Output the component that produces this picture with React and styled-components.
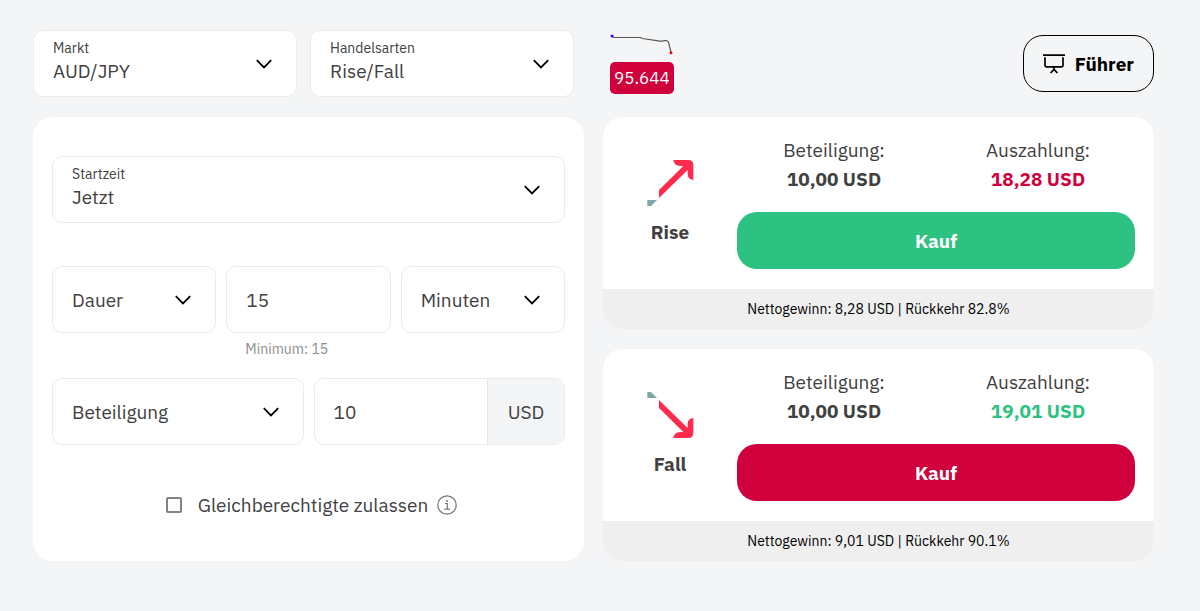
import React from 'react';
import styled, { createGlobalStyle } from 'styled-components';

const GlobalStyle = createGlobalStyle`
  *, *::before, *::after { box-sizing: border-box; }
  body {
    margin: 0;
    background: #f4f5f7;
    color: #414141;
    font-family: "IBM Plex Sans", Roboto, "Noto Sans", sans-serif;
    font-size: 19px;
  }
  button, input, select { font: inherit; color: inherit; }
`;

const Page = styled.main`
  display: grid;
  grid-template-columns: minmax(0, 1fr) minmax(0, 1fr);
  gap: 20px 19px;
  padding: 30px 46px 50px 33px;
`;

const MarketBar = styled.div`
  display: grid;
  grid-template-columns: 1fr 1fr;
  gap: 13px;
  padding-right: 10px;
`;

const InfoBar = styled.div`
  display: flex;
  align-items: center;
  justify-content: space-between;
  padding-left: 7px;
`;

const Quote = styled.div`
  display: grid;
  gap: 6px;
  justify-items: start;
`;

const QuoteValue = styled.output`
  padding: 0 4px;
  border-radius: 5px;
  background: #cf003c;
  color: #fff;
  font-size: 17px;
  line-height: 32px;
`;

const GuideButton = styled.button`
  display: flex;
  align-items: center;
  gap: 10px;
  height: 57px;
  padding: 0 19px;
  border: 1px solid #000;
  border-radius: 20px;
  background: transparent;
  color: #000;
  font-weight: 700;
`;

const Field = styled.div`
  display: grid;
  min-width: 0;
  height: 67px;
  border: 1px solid #ebebeb;
  border-radius: 10px;
  background: #fff;
  overflow: hidden;
`;

const FieldLabel = styled.label`
  grid-area: 1 / 1;
  align-self: start;
  justify-self: start;
  z-index: 1;
  padding: 7px 19px 0;
  font-size: 14px;
  line-height: 20px;
  pointer-events: none;
`;

const Select = styled.select`
  grid-area: 1 / 1;
  width: 100%;
  height: 100%;
  border: 0;
  padding: ${(p) => (p.$labelled ? '14px 48px 0 19px' : '0 48px 0 19px')};
  appearance: none;
  background: transparent;
`;

const Chevron = styled.svg`
  grid-area: 1 / 1;
  align-self: center;
  justify-self: end;
  margin-right: 23px;
  pointer-events: none;
`;

const TextInput = styled.input`
  width: 100%;
  min-width: 0;
  height: 100%;
  border: 0;
  padding: 0 19px;
  background: transparent;
`;

const Panel = styled.form`
  display: flex;
  flex-direction: column;
  padding: 39px 19px 46px;
  border-radius: 20px;
  background: #fff;
`;

const DurationRow = styled.div`
  display: grid;
  grid-template-columns: repeat(3, minmax(0, 1fr));
  align-items: start;
  gap: 10px;
  margin: 43px 0 19px;
`;

const StakeRow = styled.div`
  display: grid;
  grid-template-columns: repeat(2, minmax(0, 1fr));
  gap: 10px;
`;

const AmountField = styled(Field)`
  grid-template-columns: 1fr 77px;
`;

const Unit = styled.span`
  display: grid;
  place-items: center;
  border-left: 1px solid #e4e6e9;
  background: #f4f5f7;
`;

const Hint = styled.p`
  margin: 6px 0 0;
  padding-left: 19px;
  color: #8c8c8c;
  font-size: 14px;
  line-height: 20px;
`;

const EqualsRow = styled.div`
  display: flex;
  align-items: center;
  justify-content: center;
  margin-top: 50px;
  padding-left: 6px;
  line-height: 20px;
`;

const Checkbox = styled.input`
  width: 16px;
  height: 16px;
  margin: 0 16px 0 0;
  border: 2px solid #828282;
  border-radius: 2px;
  appearance: none;

  &:checked { background: #828282; }
`;

const InfoButton = styled.button`
  display: flex;
  margin-left: 9px;
  padding: 0;
  border: 0;
  background: none;
`;

const Contracts = styled.div`
  display: grid;
  gap: 20px;
`;

const Contract = styled.section`
  border-radius: 20px;
  background: #fff;
  overflow: hidden;
`;

const ContractBody = styled.div`
  display: grid;
  grid-template-columns: 134px 1fr;
  padding-right: 19px;
  height: 172px;
`;

const Direction = styled.div`
  display: flex;
  flex-direction: column;
  align-items: center;
  gap: 13px;
  padding-top: 42px;
`;

const DirectionName = styled.h2`
  margin: 0;
  font-size: 19px;
  font-weight: 700;
  line-height: 24px;
`;

const Arrow = styled.svg`
  transform: ${(p) => (p.$down ? 'scaleY(-1)' : 'none')};
`;

const Prices = styled.dl`
  display: grid;
  grid-template-columns: 1fr 1fr;
  gap: 10px;
  margin: 0 0 18px;
  padding-top: 19px;
  line-height: 29px;
  text-align: center;
`;

const PriceName = styled.dt`
  font-weight: 400;
`;

const PriceValue = styled.dd`
  margin: 0;
  color: ${(p) => p.$color || 'inherit'};
  font-weight: 700;
`;

const BuyButton = styled.button`
  display: block;
  width: 100%;
  height: 57px;
  border: 0;
  border-radius: 20px;
  background: ${(p) => p.$color};
  color: #fff;
  font-weight: 700;
`;

const ContractFooter = styled.footer`
  background: #efefef;
  color: #000;
  font-size: 14px;
  line-height: 40px;
  text-align: center;
`;

function SelectField({ id, label, value }) {
  return (
    <Field>
      {label && <FieldLabel htmlFor={id}>{label}</FieldLabel>}
      <Select id={id} $labelled={Boolean(label)} aria-label={label ? undefined : value}>
        <option>{value}</option>
      </Select>
      <Chevron width="18" height="12" viewBox="0 0 18 12" fill="none" aria-hidden="true">
        <path d="M1.8 2.2 9 9.4 16.2 2.2" stroke="#000" strokeWidth="1.8" />
      </Chevron>
    </Field>
  );
}

function ContractCard({ name, down, payout, payoutColor, buyColor, summary }) {
  return (
    <Contract>
      <ContractBody>
        <Direction>
          <Arrow $down={down} width="47" height="48" viewBox="140 147 141 144" aria-hidden="true">
            <path fill="#ff2b4c" d="M219 150H264Q279 150 279 165V210Q262 208 262 193V180L176 264V240L249 168H240Q220 167 219 150Z" />
            <path fill="#80a6ab" d="M141 270H170L152 288H141Z" />
          </Arrow>
          <DirectionName>{name}</DirectionName>
        </Direction>
        <div>
          <Prices>
            <div>
              <PriceName>Beteiligung:</PriceName>
              <PriceValue>10,00 USD</PriceValue>
            </div>
            <div>
              <PriceName>Auszahlung:</PriceName>
              <PriceValue $color={payoutColor}>{payout}</PriceValue>
            </div>
          </Prices>
          <BuyButton type="button" $color={buyColor}>Kauf</BuyButton>
        </div>
      </ContractBody>
      <ContractFooter>{summary}</ContractFooter>
    </Contract>
  );
}

const GREEN = '#2dc182';
const RED = '#cf003c';

export default function App() {
  return (
    <>
      <GlobalStyle />
      <Page>
        <MarketBar>
          <SelectField id="market" label="Markt" value="AUD/JPY" />
          <SelectField id="trade-type" label="Handelsarten" value="Rise/Fall" />
        </MarketBar>
        <InfoBar>
          <Quote>
            <svg width="64" height="22" viewBox="0 0 64 22" fill="none" aria-hidden="true">
              <path d="M2 2 4 3.5H30.5L32.5 4.5 50 7.2H52L54 6.6H56.5L58.5 8 61 18.5" stroke="#555" strokeWidth="1.2" />
              <circle cx="2" cy="2" r="1.5" fill="#2a00ff" />
              <circle cx="61" cy="18.7" r="1.5" fill="#f00000" />
            </svg>
            <QuoteValue>95.644</QuoteValue>
          </Quote>
          <GuideButton type="button">
            <svg width="22" height="20" viewBox="0 0 22 20" fill="none" stroke="#000" strokeWidth="1.7" aria-hidden="true">
              <path d="M0 1.2H22M2 3.2V11.6Q2 12.8 3.2 12.8H18.8Q20 12.8 20 11.6V3.2M11 12.8V16M11 15.4 7.6 19M11 15.4 14.4 19" />
            </svg>
            Führer
          </GuideButton>
        </InfoBar>

        <Panel>
          <SelectField id="start-time" label="Startzeit" value="Jetzt" />
          <DurationRow>
            <SelectField id="expiry" value="Dauer" />
            <div>
              <Field>
                <TextInput type="text" inputMode="numeric" defaultValue="15" aria-label="Dauer" />
              </Field>
              <Hint>Minimum: 15</Hint>
            </div>
            <SelectField id="duration-unit" value="Minuten" />
          </DurationRow>
          <StakeRow>
            <SelectField id="basis" value="Beteiligung" />
            <AmountField>
              <TextInput type="text" inputMode="decimal" defaultValue="10" aria-label="Beteiligung" />
              <Unit>USD</Unit>
            </AmountField>
          </StakeRow>
          <EqualsRow>
            <Checkbox type="checkbox" id="allow-equals" />
            <label htmlFor="allow-equals">Gleichberechtigte zulassen</label>
            <InfoButton type="button" aria-label="Info">
              <svg width="20" height="20" viewBox="0 0 20 20" fill="none" stroke="#777" aria-hidden="true">
                <circle cx="10" cy="10" r="9.2" strokeWidth="1.2" />
                <path d="M8 8.5H10.3V14M7.3 14.2H13" strokeWidth="1.2" />
                <circle cx="10" cy="5.9" r="1" fill="#777" stroke="none" />
              </svg>
            </InfoButton>
          </EqualsRow>
        </Panel>

        <Contracts>
          <ContractCard
            name="Rise"
            payout="18,28 USD"
            payoutColor={RED}
            buyColor={GREEN}
            summary="Nettogewinn: 8,28 USD | Rückkehr 82.8%"
          />
          <ContractCard
            name="Fall"
            down
            payout="19,01 USD"
            payoutColor={GREEN}
            buyColor={RED}
            summary="Nettogewinn: 9,01 USD | Rückkehr 90.1%"
          />
        </Contracts>
      </Page>
    </>
  );
}
